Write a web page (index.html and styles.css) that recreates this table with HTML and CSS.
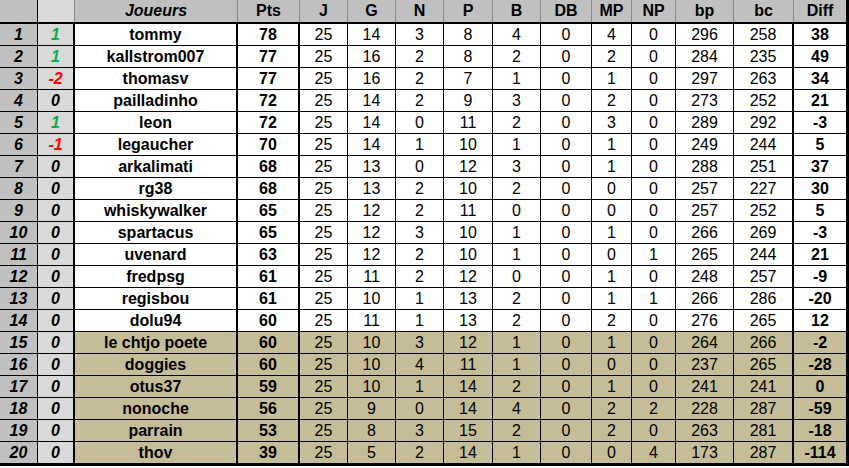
FILE: index.html
```html
<!DOCTYPE html>
<html lang="fr">
<head>
<meta charset="utf-8">
<title>Classement</title>
<link rel="stylesheet" href="styles.css">
</head>
<body>
<div class="sheet">
  <div class="row head"><div></div><div></div><div class="it">Joueurs</div><div>Pts</div><div>J</div><div>G</div><div>N</div><div>P</div><div>B</div><div>DB</div><div>MP</div><div>NP</div><div>bp</div><div>bc</div><div>Diff</div></div>
  <div class="row"><div>1</div><div class="up">1</div><div>tommy</div><div>78</div><div>25</div><div>14</div><div>3</div><div>8</div><div>4</div><div>0</div><div>4</div><div>0</div><div>296</div><div>258</div><div>38</div></div>
  <div class="row"><div>2</div><div class="up">1</div><div>kallstrom007</div><div>77</div><div>25</div><div>16</div><div>2</div><div>8</div><div>2</div><div>0</div><div>2</div><div>0</div><div>284</div><div>235</div><div>49</div></div>
  <div class="row"><div>3</div><div class="down">-2</div><div>thomasv</div><div>77</div><div>25</div><div>16</div><div>2</div><div>7</div><div>1</div><div>0</div><div>1</div><div>0</div><div>297</div><div>263</div><div>34</div></div>
  <div class="row"><div>4</div><div>0</div><div>pailladinho</div><div>72</div><div>25</div><div>14</div><div>2</div><div>9</div><div>3</div><div>0</div><div>2</div><div>0</div><div>273</div><div>252</div><div>21</div></div>
  <div class="row"><div>5</div><div class="up">1</div><div>leon</div><div>72</div><div>25</div><div>14</div><div>0</div><div>11</div><div>2</div><div>0</div><div>3</div><div>0</div><div>289</div><div>292</div><div>-3</div></div>
  <div class="row"><div>6</div><div class="down">-1</div><div>legaucher</div><div>70</div><div>25</div><div>14</div><div>1</div><div>10</div><div>1</div><div>0</div><div>1</div><div>0</div><div>249</div><div>244</div><div>5</div></div>
  <div class="row"><div>7</div><div>0</div><div>arkalimati</div><div>68</div><div>25</div><div>13</div><div>0</div><div>12</div><div>3</div><div>0</div><div>1</div><div>0</div><div>288</div><div>251</div><div>37</div></div>
  <div class="row"><div>8</div><div>0</div><div>rg38</div><div>68</div><div>25</div><div>13</div><div>2</div><div>10</div><div>2</div><div>0</div><div>0</div><div>0</div><div>257</div><div>227</div><div>30</div></div>
  <div class="row"><div>9</div><div>0</div><div>whiskywalker</div><div>65</div><div>25</div><div>12</div><div>2</div><div>11</div><div>0</div><div>0</div><div>0</div><div>0</div><div>257</div><div>252</div><div>5</div></div>
  <div class="row"><div>10</div><div>0</div><div>spartacus</div><div>65</div><div>25</div><div>12</div><div>3</div><div>10</div><div>1</div><div>0</div><div>1</div><div>0</div><div>266</div><div>269</div><div>-3</div></div>
  <div class="row"><div>11</div><div>0</div><div>uvenard</div><div>63</div><div>25</div><div>12</div><div>2</div><div>10</div><div>1</div><div>0</div><div>0</div><div>1</div><div>265</div><div>244</div><div>21</div></div>
  <div class="row"><div>12</div><div>0</div><div>fredpsg</div><div>61</div><div>25</div><div>11</div><div>2</div><div>12</div><div>0</div><div>0</div><div>1</div><div>0</div><div>248</div><div>257</div><div>-9</div></div>
  <div class="row"><div>13</div><div>0</div><div>regisbou</div><div>61</div><div>25</div><div>10</div><div>1</div><div>13</div><div>2</div><div>0</div><div>1</div><div>1</div><div>266</div><div>286</div><div>-20</div></div>
  <div class="row"><div>14</div><div>0</div><div>dolu94</div><div>60</div><div>25</div><div>11</div><div>1</div><div>13</div><div>2</div><div>0</div><div>2</div><div>0</div><div>276</div><div>265</div><div>12</div></div>
  <div class="row tan"><div>15</div><div>0</div><div>le chtjo poete</div><div>60</div><div>25</div><div>10</div><div>3</div><div>12</div><div>1</div><div>0</div><div>1</div><div>0</div><div>264</div><div>266</div><div>-2</div></div>
  <div class="row tan"><div>16</div><div>0</div><div>doggies</div><div>60</div><div>25</div><div>10</div><div>4</div><div>11</div><div>1</div><div>0</div><div>0</div><div>0</div><div>237</div><div>265</div><div>-28</div></div>
  <div class="row tan"><div>17</div><div>0</div><div>otus37</div><div>59</div><div>25</div><div>10</div><div>1</div><div>14</div><div>2</div><div>0</div><div>1</div><div>0</div><div>241</div><div>241</div><div>0</div></div>
  <div class="row tan"><div>18</div><div>0</div><div>nonoche</div><div>56</div><div>25</div><div>9</div><div>0</div><div>14</div><div>4</div><div>0</div><div>2</div><div>2</div><div>228</div><div>287</div><div>-59</div></div>
  <div class="row tan"><div>19</div><div>0</div><div>parrain</div><div>53</div><div>25</div><div>8</div><div>3</div><div>15</div><div>2</div><div>0</div><div>2</div><div>0</div><div>263</div><div>281</div><div>-18</div></div>
  <div class="row tan last"><div>20</div><div>0</div><div>thov</div><div>39</div><div>25</div><div>5</div><div>2</div><div>14</div><div>1</div><div>0</div><div>0</div><div>4</div><div>173</div><div>287</div><div>-114</div></div>
</div>
</body>
</html>
```

FILE: styles.css
```css
html, body {
  margin: 0;
  padding: 0;
  background: #ffffff;
}

body {
  font-family: "Liberation Sans", Arial, sans-serif;
  color: #000000;
}

.sheet {
  width: 849px;
}

.row {
  display: grid;
  grid-template-columns: 38px 37px 163px 62px 48px 48px 48px 49px 48px 51px 40px 44px 58px 60px 55px;
  height: 22px;
  box-sizing: border-box;
  border-bottom: 1px solid #000000;
}

.row > div {
  box-sizing: border-box;
  border-right: 1px solid #000000;
  display: flex;
  align-items: center;
  justify-content: center;
  font-size: 16px;
  line-height: 1;
  white-space: nowrap;
  overflow: hidden;
  background: #ffffff;
}

/* thick vertical rules */
.row > div:nth-child(2),
.row > div:nth-child(3),
.row > div:nth-child(4),
.row > div:nth-child(14) {
  border-right-width: 2px;
}

.row > div:nth-child(15) {
  border-right-width: 3px;
}

/* rank column */
.row > div:nth-child(1) {
  background: #c0c0c0;
  font-weight: bold;
  font-style: italic;
}

/* movement column */
.row > div:nth-child(2) {
  background: #d9d9d9;
  font-weight: bold;
  font-style: italic;
}

.row > div.up {
  color: #00b050;
}

.row > div.down {
  color: #ff0000;
}

/* names */
.row > div:nth-child(3) {
  font-weight: bold;
}

/* points and diff */
.row > div:nth-child(4),
.row > div:nth-child(15) {
  font-weight: bold;
}

/* header */
.head {
  height: 24px;
  border-bottom-width: 2px;
}

.head > div {
  background: #c0c0c0;
  font-weight: bold;
  padding-bottom: 1px;
}

.head > div:nth-child(n+2) {
  border-right: 1px solid #8c8c8c;
}

.head > div:nth-child(2) {
  background: #d9d9d9;
}

.head > div:nth-child(15) {
  border-right: 3px solid #000000;
}

.head > div.it {
  font-style: italic;
}

/* relegation zone */
.tan > div:nth-child(n+3) {
  background: #c4bd97;
}

.last {
  height: 24px;
  border-bottom-width: 3px;
}
```
